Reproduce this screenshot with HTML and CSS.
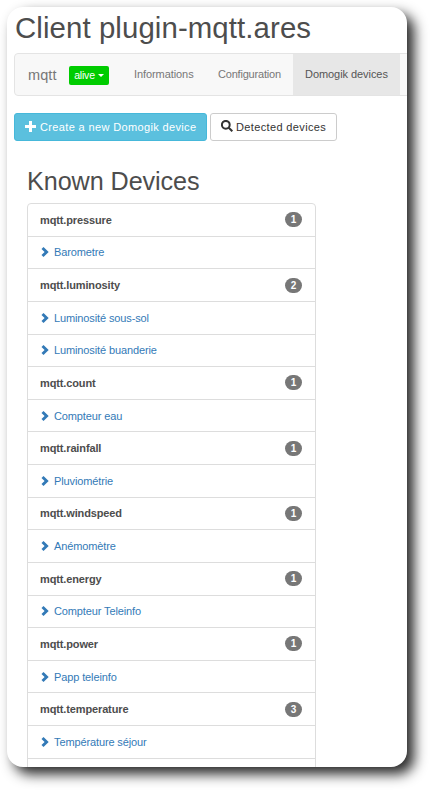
FILE: index.html
```html
<!DOCTYPE html>
<html lang="en">
<head>
<meta charset="utf-8">
<title>Client plugin-mqtt.ares</title>
<link rel="stylesheet" href="styles.css">
</head>
<body>
<svg class="symbols" aria-hidden="true">
  <symbol id="chevron" viewBox="0 0 8 10"><path d="M.5 2L2.5 0L7.7 5L2.5 10L.5 8L3.6 5Z"/></symbol>
</svg>
<main class="card">
  <h1>Client plugin-mqtt.ares</h1>
  <nav class="navbar">
    <span class="brand">mqtt</span>
    <span class="status"><span>alive</span><i class="caret"></i></span>
    <a class="tab informations">Informations</a>
    <a class="tab configuration">Configuration</a>
    <a class="tab active">Domogik devices</a>
  </nav>
  <div class="actions">
    <a class="btn primary"><svg class="plus" viewBox="0 0 11 11"><path d="M4 0h3v4h4v3H7v4H4V7H0V4h4Z"/></svg><span>Create a new Domogik device</span></a>
    <a class="btn detected"><svg class="search" viewBox="0 0 12 12"><circle cx="4.8" cy="4.8" r="3.9"/><path d="M7.5 7.5L11.3 11.3"/></svg><span>Detected devices</span></a>
  </div>
  <h2>Known Devices</h2>
  <ul class="list">
    <li class="group"><b>mqtt.pressure</b><span class="badge">1</span></li>
    <li><svg><use href="#chevron"/></svg><a>Barometre</a></li>
    <li class="group"><b>mqtt.luminosity</b><span class="badge">2</span></li>
    <li><svg><use href="#chevron"/></svg><a>Luminosité sous-sol</a></li>
    <li><svg><use href="#chevron"/></svg><a>Luminosité buanderie</a></li>
    <li class="group"><b>mqtt.count</b><span class="badge">1</span></li>
    <li><svg><use href="#chevron"/></svg><a>Compteur eau</a></li>
    <li class="group"><b>mqtt.rainfall</b><span class="badge">1</span></li>
    <li><svg><use href="#chevron"/></svg><a>Pluviométrie</a></li>
    <li class="group"><b>mqtt.windspeed</b><span class="badge">1</span></li>
    <li><svg><use href="#chevron"/></svg><a>Anémomètre</a></li>
    <li class="group"><b>mqtt.energy</b><span class="badge">1</span></li>
    <li><svg><use href="#chevron"/></svg><a>Compteur Teleinfo</a></li>
    <li class="group"><b>mqtt.power</b><span class="badge">1</span></li>
    <li><svg><use href="#chevron"/></svg><a>Papp teleinfo</a></li>
    <li class="group"><b>mqtt.temperature</b><span class="badge">3</span></li>
    <li><svg><use href="#chevron"/></svg><a>Température séjour</a></li>
    <li></li>
  </ul>
</main>
</body>
</html>
```
FILE: styles.css
```css
* { box-sizing: border-box; }
html { background: #fff; }
body {
  margin: 0;
  height: 790px;
  padding: 7px;
  overflow: hidden;
  font: 11px/16px "Liberation Sans", Arial, sans-serif;
  color: #4d4d4d;
}
.symbols { position: absolute; width: 0; height: 0; }
.card {
  width: 400px;
  height: 760px;
  overflow: hidden;
  border-radius: 16px;
  background: #fff;
  box-shadow: 7px 7px 13px rgba(0, 0, 0, .86);
}
h1, h2 { margin: 0; font-weight: 400; white-space: nowrap; }
h1 { padding: 4px 0 0 8px; height: 46px; font-size: 29.4px; line-height: 34px; letter-spacing: .09px; }
.navbar {
  display: flex;
  align-items: center;
  width: 410px;
  height: 43px;
  margin-left: 7px;
  border: 1px solid #e4e4e4;
  border-radius: 4px;
  background: #f8f8f8;
  color: #777;
}
.brand { width: 54px; padding-left: 13px; font-size: 14.5px; letter-spacing: .1px; }
.status {
  display: flex;
  align-items: center;
  justify-content: center;
  gap: 3px;
  width: 40px;
  height: 19px;
  margin-top: 2px;
  border-radius: 2px;
  background: #0c0;
  color: #fff;
  font-size: 10.5px;
  line-height: 15px;
}
.status span { margin-top: -1px; letter-spacing: -.2px; }
.caret { border: 3.5px solid transparent; border-top-color: #fff; border-bottom: 0; }
.tab { flex: none; height: 41px; line-height: 41px; white-space: nowrap; }
.informations { width: 84px; margin-left: 25px; letter-spacing: -.08px; }
.configuration { width: 75px; letter-spacing: -.2px; }
.active { width: 107px; padding-left: 12px; background: #e7e7e7; color: #555; letter-spacing: -.06px; }
.actions { display: flex; gap: 4px; margin: 17px 0 0 7px; }
.btn {
  display: flex;
  align-items: center;
  height: 28px;
  padding-left: 10px;
  border: 1px solid #ccc;
  border-radius: 3px;
  color: #333;
  white-space: nowrap;
}
.primary { width: 193px; border-color: #46b8da; background: #5bc0de; color: #fff; }
.detected { width: 127px; margin-left: -1px; padding-left: 10px; }
.plus { width: 11px; height: 11px; margin: 0 4px 2px 0; fill: #fff; }
.search { width: 12px; height: 12px; margin: 0 3px 2px 0; fill: none; stroke: #333; stroke-width: 2; }
.primary span { letter-spacing: .36px; }
.detected span { letter-spacing: .36px; }
h2 { margin: 25px 0 0 20px; height: 37px; font-size: 25.2px; line-height: 30px; letter-spacing: -.08px; }
.list {
  width: 289px;
  margin: 0 0 0 20px;
  padding: 0;
  list-style: none;
  border: 1px solid #ddd;
  border-radius: 4px;
}
.list li {
  display: flex;
  align-items: center;
  height: 32.63px;
  padding: 0 12px 0 13px;
  border-bottom: 1px solid #ddd;
  color: #337ab7;
  letter-spacing: -.12px;
}
.list svg { width: 8px; height: 10px; margin-right: 5px; fill: #337ab7; }
.list .group { justify-content: space-between; padding-left: 12px; color: #4d4d4d; letter-spacing: -.13px; }
.badge {
  width: 17px;
  height: 15px;
  margin-right: 1px;
  border-radius: 8px;
  background: #777;
  color: #fff;
  font-size: 10px;
  font-weight: 700;
  line-height: 15px;
  text-align: center;
}
```
